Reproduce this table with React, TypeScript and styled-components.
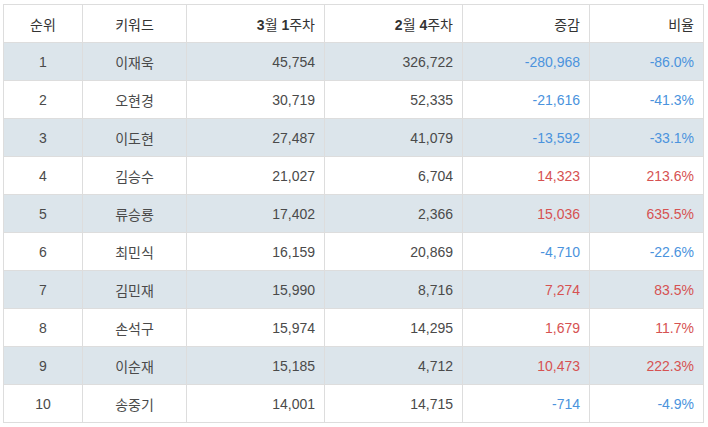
import * as React from 'react';
import styled, { createGlobalStyle } from 'styled-components';

const GlobalStyle = createGlobalStyle`
    html, body {
        margin: 0;
        padding: 0;
        background: #fff;
    }
    body {
        font-family: 'Liberation Sans', 'Noto Sans CJK KR', sans-serif;
    }
`;

const Wrapper = styled.div`
    padding: 4px 0 0 3px;
`;

const Table = styled.table`
    width: 700px;
    table-layout: fixed;
    border-collapse: collapse;
    font-size: 14px;
    color: #4a4a4a;
`;

const HeadCell = styled.th<{ $align?: string }>`
    height: 37px;
    padding: 0 9px;
    border: 1px solid #ddd;
    font-weight: normal;
    color: #333;
    text-align: ${p => p.$align || 'right'};
    b {
        font-weight: bold;
    }
`;

const Row = styled.tr<{ $shaded: boolean }>`
    background: ${p => (p.$shaded ? '#dce5eb' : '#fff')};
`;

const Cell = styled.td<{ $align?: string; $tone?: 'up' | 'down' }>`
    height: 37px;
    padding: 0 9px;
    border: 1px solid #ddd;
    text-align: ${p => p.$align || 'right'};
    color: ${p => (p.$tone === 'up' ? '#d65252' : p.$tone === 'down' ? '#4b93dd' : '#4a4a4a')};
`;

const rows = [
    ['이재욱', '45,754', '326,722', '-280,968', '-86.0%'],
    ['오현경', '30,719', '52,335', '-21,616', '-41.3%'],
    ['이도현', '27,487', '41,079', '-13,592', '-33.1%'],
    ['김승수', '21,027', '6,704', '14,323', '213.6%'],
    ['류승룡', '17,402', '2,366', '15,036', '635.5%'],
    ['최민식', '16,159', '20,869', '-4,710', '-22.6%'],
    ['김민재', '15,990', '8,716', '7,274', '83.5%'],
    ['손석구', '15,974', '14,295', '1,679', '11.7%'],
    ['이순재', '15,185', '4,712', '10,473', '222.3%'],
    ['송중기', '14,001', '14,715', '-714', '-4.9%'],
];

export default function App() {
    return (
        <Wrapper>
            <GlobalStyle />
            <Table>
                <colgroup>
                    <col style={{ width: 79 }} />
                    <col style={{ width: 104 }} />
                    <col style={{ width: 138 }} />
                    <col style={{ width: 138 }} />
                    <col style={{ width: 127 }} />
                    <col style={{ width: 114 }} />
                </colgroup>
                <thead>
                    <tr>
                        <HeadCell $align="center">순위</HeadCell>
                        <HeadCell $align="center">키워드</HeadCell>
                        <HeadCell>
                            <b>3</b>월 <b>1</b>주차
                        </HeadCell>
                        <HeadCell>
                            <b>2</b>월 <b>4</b>주차
                        </HeadCell>
                        <HeadCell>증감</HeadCell>
                        <HeadCell>비율</HeadCell>
                    </tr>
                </thead>
                <tbody>
                    {rows.map((r, i) => {
                        const tone = r[3].startsWith('-') ? 'down' : 'up';
                        return (
                            <Row key={i} $shaded={i % 2 === 0}>
                                <Cell $align="center">{i + 1}</Cell>
                                <Cell $align="center">{r[0]}</Cell>
                                <Cell>{r[1]}</Cell>
                                <Cell>{r[2]}</Cell>
                                <Cell $tone={tone}>{r[3]}</Cell>
                                <Cell $tone={tone}>{r[4]}</Cell>
                            </Row>
                        );
                    })}
                </tbody>
            </Table>
        </Wrapper>
    );
}
